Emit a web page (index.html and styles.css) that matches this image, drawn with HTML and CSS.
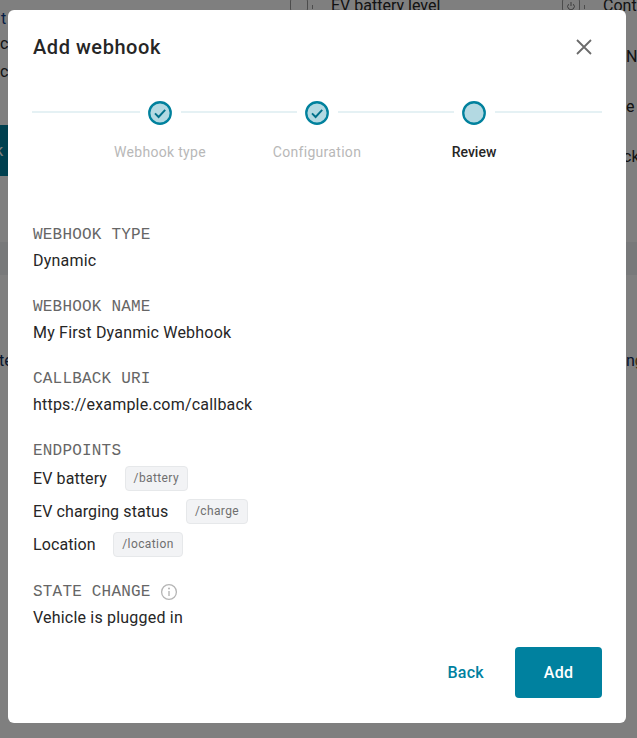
FILE: index.html
```html
<!DOCTYPE html>
<html lang="en">
<head>
<meta charset="utf-8">
<title>Add webhook</title>
<link rel="stylesheet" href="styles.css">
</head>
<body>
<div class="backdrop" aria-hidden="true">
  <span class="bg bg-t">t</span>
  <span class="bg bg-ce">ce</span>
  <span class="bg bg-c">c</span>
  <div class="bg-btn"><span>k</span></div>
  <div class="bg-band"></div>
  <span class="bg bg-te">te</span>
  <span class="bg bg-ng">n<span class="bg-gold">g</span></span>
  <div class="bg-box bg-box1"></div>
  <div class="bg-nub bg-nub1"></div>
  <span class="bg bg-level">EV battery level</span>
  <div class="bg-box bg-box2">
    <svg width="10" height="9" viewBox="0 0 10 9"><path d="M5 0v4M2.6 2.2a3.3 3.3 0 1 0 4.8 0" fill="none" stroke="#777" stroke-width="1"/></svg>
  </div>
  <div class="bg-nub bg-nub2"></div>
  <span class="bg bg-cont">Cont</span>
  <span class="bg bg-n">N</span>
  <span class="bg bg-e">e</span>
  <span class="bg bg-ck">ck</span>
</div>
<div class="overlay"></div>
<main class="modal">
  <header class="modal-head">
    <h1 class="title">Add webhook</h1>
    <button class="close" aria-label="Close">
      <svg width="16" height="16" viewBox="0 0 16 16"><path d="M1 1 15 15M15 1 1 15" stroke="#6b6b6b" stroke-width="1.8" fill="none"/></svg>
    </button>
  </header>
  <div class="stepper">
    <div class="track">
      <span class="line"></span>
      <svg class="dot" width="24" height="24" viewBox="0 0 24 24"><circle cx="12" cy="12" r="10.75" fill="#b3d9e2" stroke="#00819d" stroke-width="2.3"/><path d="M7 12.3 10.6 16 17.2 8.8" fill="none" stroke="#00708a" stroke-width="1.9"/></svg>
      <span class="line mid"></span>
      <svg class="dot" width="24" height="24" viewBox="0 0 24 24"><circle cx="12" cy="12" r="10.75" fill="#b3d9e2" stroke="#00819d" stroke-width="2.3"/><path d="M7 12.3 10.6 16 17.2 8.8" fill="none" stroke="#00708a" stroke-width="1.9"/></svg>
      <span class="line mid"></span>
      <svg class="dot" width="24" height="24" viewBox="0 0 24 24"><circle cx="12" cy="12" r="10.75" fill="#b3d9e2" stroke="#00819d" stroke-width="2.3"/></svg>
      <span class="line"></span>
    </div>
    <div class="step-labels">
      <span class="step-label">Webhook type</span>
      <span class="step-label">Configuration</span>
      <span class="step-label current">Review</span>
    </div>
  </div>
  <section class="review">
    <div class="group">
      <div class="label">WEBHOOK TYPE</div>
      <div class="value">Dynamic</div>
    </div>
    <div class="group">
      <div class="label">WEBHOOK NAME</div>
      <div class="value">My First Dyanmic Webhook</div>
    </div>
    <div class="group">
      <div class="label">CALLBACK URI</div>
      <div class="value">https://example.com/callback</div>
    </div>
    <div class="group">
      <div class="label">ENDPOINTS</div>
      <div class="endpoints">
        <div class="endpoint"><span class="value">EV battery</span><code class="tag">/battery</code></div>
        <div class="endpoint"><span class="value">EV charging status</span><code class="tag">/charge</code></div>
        <div class="endpoint"><span class="value">Location</span><code class="tag">/location</code></div>
      </div>
    </div>
    <div class="group">
      <div class="label with-icon">STATE CHANGE
        <svg width="18" height="18" viewBox="0 0 18 18"><circle cx="9" cy="9" r="7.4" fill="none" stroke="#b5b5b5" stroke-width="1.3"/><circle cx="9" cy="5.6" r="1" fill="#b5b5b5"/><path d="M9 8v5" stroke="#b5b5b5" stroke-width="1.4"/></svg>
      </div>
      <div class="value">Vehicle is plugged in</div>
    </div>
  </section>
  <footer class="actions">
    <button class="btn-back">Back</button>
    <button class="btn-add">Add</button>
  </footer>
</main>
</body>
</html>
```
FILE: styles.css
```css
html, body {
  margin: 0;
  height: 100%;
  overflow: hidden;
}
body {
  position: relative;
  width: 637px;
  height: 738px;
  background: #fff;
  font-family: Roboto, "Liberation Sans", sans-serif;
  color: #262626;
}
.backdrop {
  position: absolute;
  inset: 0;
}
.bg {
  position: absolute;
  font-size: 16px;
  line-height: 20px;
  color: #262626;
}
.bg-t { left: 1px; top: 9px; color: #0a3a8a; }
.bg-ce { left: 0; top: 34px; }
.bg-c { left: 0; top: 62px; }
.bg-btn {
  position: absolute;
  left: 0;
  top: 125px;
  width: 8px;
  height: 51px;
  background: #00819f;
  color: #fff;
  font-size: 16px;
  line-height: 51px;
  overflow: hidden;
}
.bg-btn span { margin-left: -5px; }
.bg-band {
  position: absolute;
  left: 0;
  right: 0;
  top: 242px;
  height: 33px;
  background: #f0f2f4;
}
.bg-te { left: -1px; top: 351px; color: #0a2a5a; }
.bg-ng { left: 626px; top: 351px; color: #0a2a5a; }
.bg-gold { color: #8a5a10; }
.bg-box {
  position: absolute;
  top: -2px;
  width: 18px;
  height: 14px;
  border: 1px solid #999;
  border-radius: 3px;
  box-sizing: border-box;
  display: flex;
  align-items: flex-end;
  justify-content: center;
}
.bg-box1 { left: 290px; }
.bg-box2 { left: 562px; }
.bg-nub {
  position: absolute;
  top: 5px;
  width: 1px;
  height: 4px;
  background: #999;
}
.bg-nub1 { left: 312px; }
.bg-nub2 { left: 584px; }
.bg-level { left: 331px; top: -4px; }
.bg-cont { left: 603px; top: -4px; }
.bg-n { left: 626px; top: 47px; }
.bg-e { left: 626px; top: 97px; }
.bg-ck { left: 623px; top: 147px; }
.overlay {
  position: absolute;
  inset: 0;
  background: rgba(0, 0, 0, 0.5);
}
.modal {
  position: absolute;
  left: 8px;
  top: 10px;
  width: 618px;
  height: 713px;
  box-sizing: border-box;
  padding: 0 24px;
  background: #fff;
  border-radius: 6px;
  display: flex;
  flex-direction: column;
}
.modal-head {
  display: flex;
  align-items: center;
  justify-content: space-between;
  height: 74px;
}
.title {
  margin: 0 0 0 1px;
  font-size: 20px;
  font-weight: 500;
  line-height: 26px;
  letter-spacing: 0.55px;
  color: #262626;
}
.close {
  display: flex;
  padding: 0;
  margin-right: 10px;
  border: 0;
  background: none;
}
.stepper {
  margin-top: 17px;
}
.track {
  display: flex;
  align-items: center;
  gap: 8.5px;
  height: 24px;
}
.line {
  flex: 0 0 107.5px;
  height: 2px;
  margin-top: -3px;
  background: #e5f1f4;
}
.line.mid { flex-basis: 116px; }
.dot { flex: none; }
.step-labels {
  display: grid;
  grid-template-columns: repeat(3, 157px);
  justify-content: center;
  margin-top: 16px;
}
.step-label {
  text-align: center;
  font-size: 14px;
  line-height: 22px;
  letter-spacing: 0.3px;
  color: #b8b8b8;
}
.step-label.current {
  color: #262626;
  font-weight: 500;
  letter-spacing: 0;
}
.review {
  margin-top: 59px;
  margin-left: 1px;
  display: flex;
  flex-direction: column;
  gap: 20px;
}
.label {
  font-family: "Liberation Mono", "DejaVu Sans Mono", monospace;
  font-size: 16px;
  line-height: 26px;
  color: #666;
  letter-spacing: 0.2px;
}
.with-icon {
  display: flex;
  align-items: center;
  gap: 9px;
}
.value {
  font-size: 16px;
  line-height: 26px;
  letter-spacing: 0.2px;
  color: #262626;
}
.endpoints {
  display: flex;
  flex-direction: column;
  gap: 6px;
  padding: 1px 0;
}
.endpoint {
  display: flex;
  align-items: center;
  gap: 17.5px;
  height: 27px;
}
.endpoint .value {
  letter-spacing: 0.1px;
}
.tag {
  font-family: Roboto, "Liberation Sans", sans-serif;
  font-size: 12px;
  line-height: 23px;
  letter-spacing: 0.4px;
  padding: 0 8px;
  color: #6f6f6f;
  background: #f2f3f5;
  border: 1px solid #e6e8ea;
  border-radius: 4px;
}
.actions {
  position: absolute;
  right: 24px;
  bottom: 25px;
  display: flex;
  align-items: center;
  gap: 31px;
}
.btn-back, .btn-add {
  font-family: Roboto, "Liberation Sans", sans-serif;
  font-size: 16px;
  font-weight: 500;
  letter-spacing: 0.3px;
  border: 0;
  padding: 0;
}
.btn-back {
  background: none;
  color: #00819f;
}
.btn-add {
  width: 87px;
  height: 51px;
  border-radius: 4px;
  background: #00819f;
  color: #fff;
}
```
